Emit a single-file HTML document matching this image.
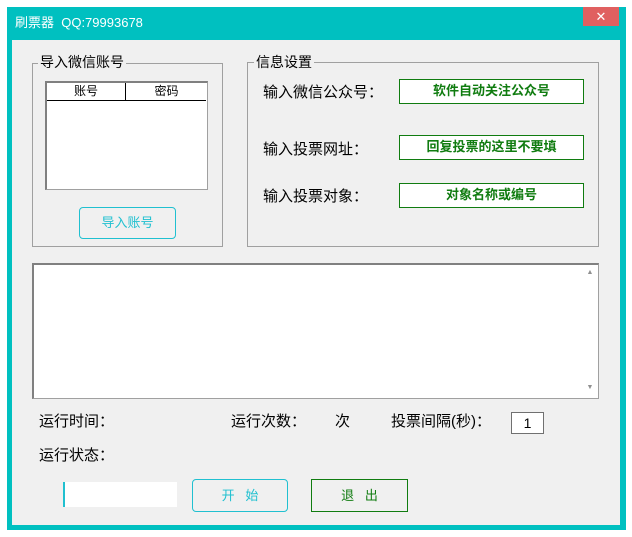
<!DOCTYPE html>
<html><head><meta charset="utf-8"><style>
*{margin:0;padding:0;box-sizing:border-box}
body{width:632px;height:537px;background:#fff;position:relative;overflow:hidden;font-family:"Liberation Sans","Noto Sans CJK SC",sans-serif;font-size:14px;color:#000}
.a{position:absolute}
.win{left:7px;top:7px;width:619px;height:523px;background:#00c0c0}
.cont{left:12px;top:40px;width:608px;height:485px;background:#f0f0f0}
.grp{border:1px solid #a0a0a0}
.leg{background:#f0f0f0;padding:0 2px;font-size:14px;line-height:16px}
.gbox{background:#fff;border:1px solid #107c10;color:#107c10;font-weight:bold;font-size:13px;text-align:center;line-height:22px}
.lbl{font-size:15px;line-height:18px}
</style></head><body>
<div class="a win"></div>
<div class="a" style="left:15px;top:15px;color:#fff;font-size:13px;line-height:16px">刷票器&nbsp;&nbsp;QQ:79993678</div>
<div class="a" style="left:583px;top:7px;width:36px;height:19px;background:#e06060;color:#fff;text-align:center;font-size:13px;line-height:19px">✕</div>
<div class="a cont"></div>

<div class="a grp" style="left:32px;top:63px;width:191px;height:184px"></div>
<div class="a leg" style="left:38px;top:54px">导入微信账号</div>
<div class="a" style="left:45px;top:81px;width:163px;height:109px;background:#fff;border:1px solid #a0a0a0;border-top:2px solid #808080;border-left:2px solid #808080"></div>
<div class="a" style="left:47px;top:83px;width:159px;height:18px;border-bottom:1px solid #000;font-size:12px;line-height:17px">
<span class="a" style="left:0;width:79px;text-align:center;border-right:1px solid #000;height:17px">账号</span>
<span class="a" style="left:80px;width:79px;text-align:center">密码</span></div>
<div class="a" style="left:79px;top:207px;width:97px;height:32px;border:1px solid #20c0d0;border-radius:4px;color:#20c0d0;text-align:center;line-height:30px;font-size:13px">导入账号</div>

<div class="a grp" style="left:247px;top:62px;width:352px;height:185px"></div>
<div class="a leg" style="left:254px;top:54px">信息设置</div>
<div class="a lbl" style="left:263px;top:84px">输入微信公众号：</div>
<div class="a lbl" style="left:263px;top:141px">输入投票网址：</div>
<div class="a lbl" style="left:263px;top:188px">输入投票对象：</div>
<div class="a gbox" style="left:399px;top:79px;width:185px;height:25px">软件自动关注公众号</div>
<div class="a gbox" style="left:399px;top:135px;width:185px;height:25px">回复投票的这里不要填</div>
<div class="a gbox" style="left:399px;top:183px;width:185px;height:25px">对象名称或编号</div>

<div class="a" style="left:32px;top:263px;width:567px;height:136px;background:#fff;border:1px solid #a0a0a0;border-top:2px solid #808080;border-left:2px solid #808080"></div>
<div class="a" style="left:583px;top:265px;width:14px;height:132px;background:#fff;color:#909090;font-size:7px;text-align:center">
<div style="margin-top:4px">▲</div><div style="margin-top:108px">▼</div></div>

<div class="a lbl" style="left:39px;top:413px">运行时间：</div>
<div class="a lbl" style="left:231px;top:413px">运行次数：</div>
<div class="a lbl" style="left:335px;top:413px">次</div>
<div class="a lbl" style="left:391px;top:413px">投票间隔(秒)：</div>
<div class="a" style="left:511px;top:412px;width:33px;height:22px;background:#fff;border:1px solid #707070;text-align:center;line-height:20px;font-size:14px">1</div>
<div class="a lbl" style="left:39px;top:447px">运行状态：</div>

<div class="a" style="left:63px;top:482px;width:114px;height:25px;background:#fff;border-left:2px solid #20c0d0"></div>
<div class="a" style="left:192px;top:479px;width:96px;height:33px;border:1px solid #20c0d0;border-radius:4px;color:#20c0d0;text-align:center;line-height:31px;font-size:13px">开&nbsp;&nbsp;&nbsp;始</div>
<div class="a" style="left:311px;top:479px;width:97px;height:33px;border:1px solid #107c10;color:#107c10;text-align:center;line-height:31px;font-size:13px">退&nbsp;&nbsp;&nbsp;出</div>
</body></html>
